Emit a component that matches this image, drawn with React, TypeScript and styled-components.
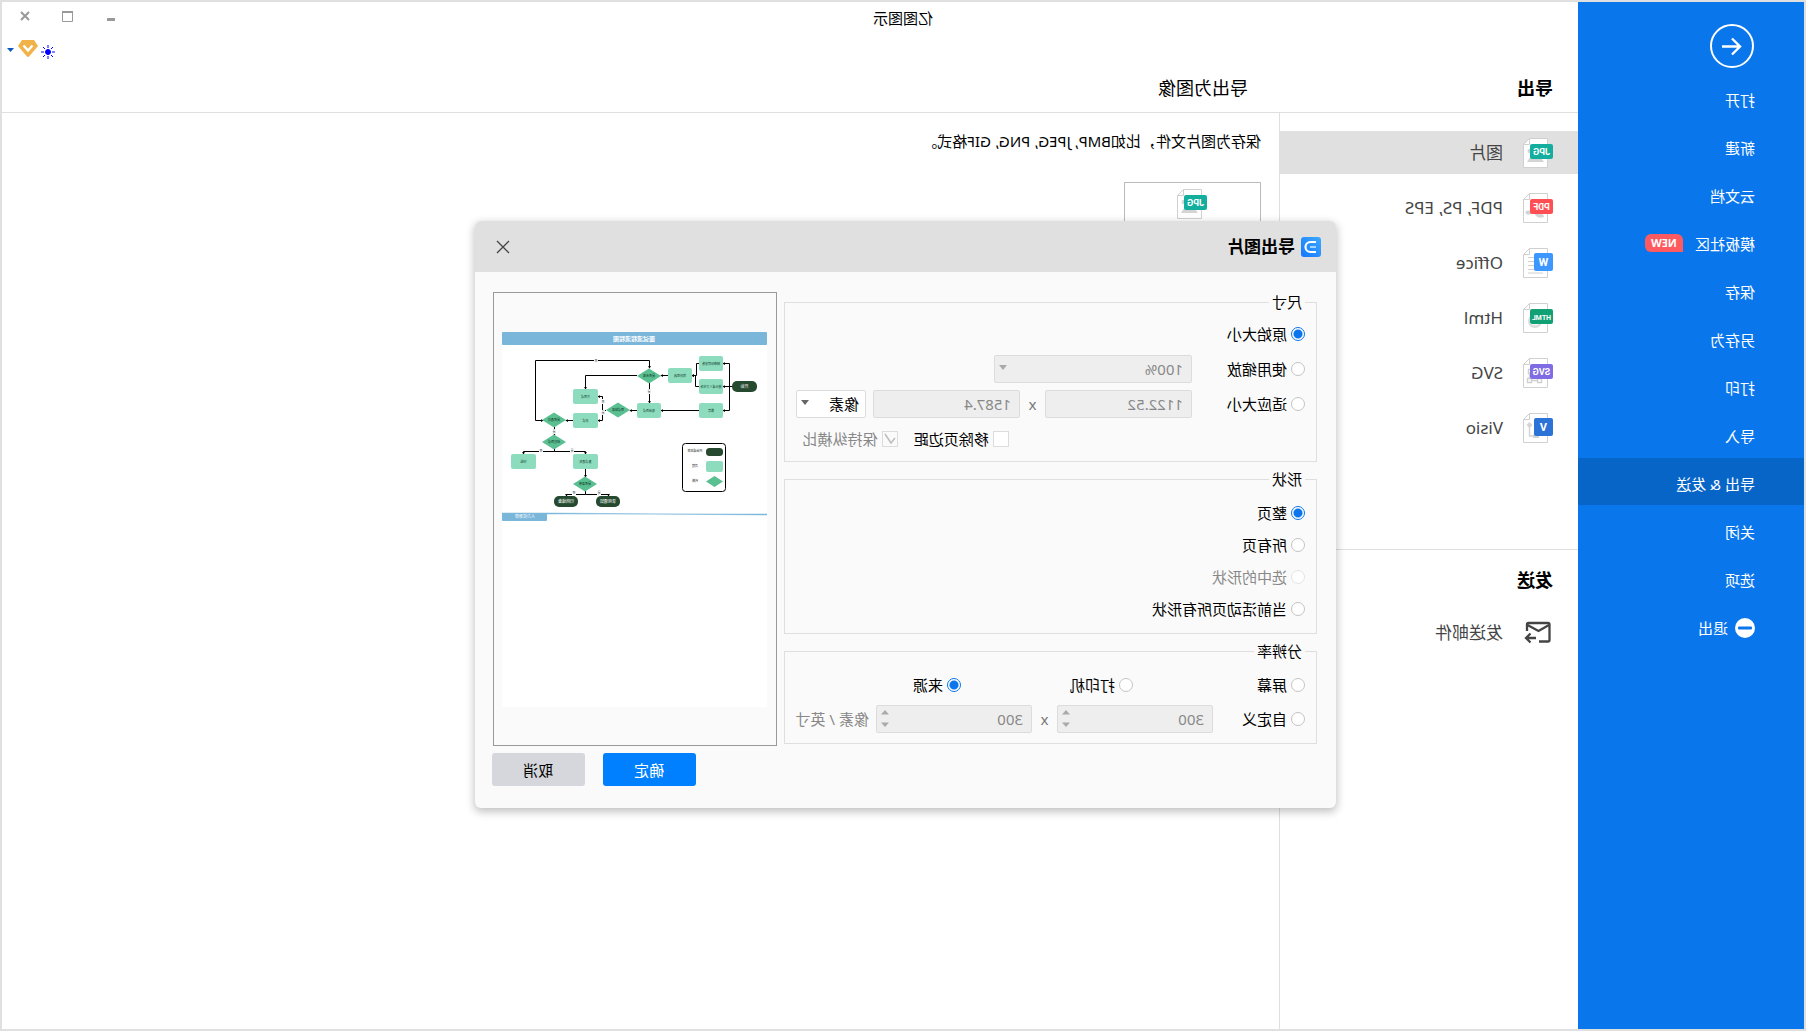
import React from 'react';
import styled, { createGlobalStyle, css } from 'styled-components';

const SIDEBAR = 226;
const LIST = 299;

const GlobalStyle = createGlobalStyle`
  *, *::before, *::after { box-sizing: border-box; }
  body { margin: 0; background: #fff; }
  body, button, input, select {
    font-family: "Noto Sans", "Noto Sans CJK SC", sans-serif;
    font-size: 15px;
    font-kerning: none;
    line-height: 20px;
    color: #000;
  }
`;

/* The whole window is flipped left to right, its text included. */
const Window = styled.div`
  position: relative;
  display: flex;
  min-height: 100vh;
  border: 2px solid #e0e0e0;
  background: #fff;
  transform: scaleX(-1);
`;

/* ---------- sidebar ---------- */

const Sidebar = styled.nav`
  flex: none;
  width: ${SIDEBAR}px;
  padding-top: 22px;
  background: #0a76eb;
`;

const BackButton = styled.button`
  display: block;
  width: 44px;
  height: 44px;
  margin: 0 0 6px 50px;
  padding: 0;
  border: 0;
  background: none;
`;

const Menu = styled.ul`
  display: flex;
  flex-direction: column;
  gap: 1px;
  margin: 0;
  padding: 0;
  list-style: none;
`;

const MenuLink = styled.a<{ $active?: boolean }>`
  display: flex;
  align-items: center;
  gap: 7px;
  height: 47px;
  padding: 4px 0 0 49px;
  background: ${(p) => (p.$active ? '#0865c8' : 'transparent')};
  color: #fff;
  text-decoration: none;
`;

const NewBadge = styled.span`
  margin: 0 0 2px 5px;
  width: 38px;
  border-radius: 6px 6px 6px 0;
  background: #ff5a5f;
  font-size: 11px;
  font-weight: 700;
  line-height: 18px;
  text-align: center;
`;

/* ---------- workspace ---------- */

const Workspace = styled.div`
  flex: 1;
  min-width: 0;
  display: flex;
  flex-direction: column;
`;

const TitleBar = styled.header`
  display: flex;
  height: 36px;
`;

const AppTitle = styled.div`
  flex: 1;
  line-height: 32px;
  text-align: center;
`;

const WindowControls = styled.div`
  display: flex;
  justify-content: flex-end;
  width: ${SIDEBAR}px;
  padding-right: 2px;
`;

const ControlButton = styled.button`
  display: grid;
  place-items: center;
  width: 43px;
  height: 27px;
  padding: 0;
  border: 0;
  background: none;
`;

const Tools = styled.div`
  display: flex;
  justify-content: flex-end;
  align-items: center;
  gap: 3px;
  height: 28px;
  padding: 0 4px 4px 0;
`;

const ToolButton = styled.button`
  display: grid;
  place-items: center;
  padding: 0;
  border: 0;
  background: none;
`;

const Headings = styled.div`
  display: flex;
  height: 47px;
  border-bottom: 1px solid #dfdfdf;
`;

const Heading = styled.h2<{ $plain?: boolean }>`
  margin: 0;
  font-size: 18px;
  font-weight: ${(p) => (p.$plain ? 400 : 700)};
  line-height: 44px;
  padding-left: ${(p) => (p.$plain ? 31 : 25)}px;
  ${(p) => !p.$plain && css`width: ${LIST}px;`}
`;

const Columns = styled.div`
  flex: 1;
  display: flex;
`;

const ListColumn = styled.div`
  flex: none;
  width: ${LIST}px;
  border-right: 1px solid #dfdfdf;
`;

const FormatSection = styled.section`
  min-height: 437px;
  padding-top: 18px;
  border-bottom: 1px solid #dfdfdf;
`;

const FormatList = styled.ul`
  display: flex;
  flex-direction: column;
  gap: 12px;
  margin: 0;
  padding: 0;
  list-style: none;
`;

const FormatLink = styled.a<{ $active?: boolean }>`
  display: flex;
  align-items: center;
  gap: 20px;
  height: 43px;
  padding-left: 25px;
  background: ${(p) => (p.$active ? '#e0e0e0' : 'transparent')};
  color: #444;
  font-size: 17px;
  text-decoration: none;
`;

const SendHeading = styled(Heading)`
  line-height: 61px;
`;

const Main = styled.main`
  flex: 1;
  padding: 18px;
`;

const Description = styled.p`
  margin: 0 0 31px;
`;

const FormatCard = styled.button`
  display: flex;
  justify-content: center;
  align-items: flex-start;
  width: 137px;
  height: 92px;
  padding: 6px 0 0;
  border: 1px solid #bbb;
  background: #fff;
`;

/* ---------- dialog ---------- */

const Overlay = styled.div`
  position: absolute;
  inset: 0;
  display: grid;
  place-items: center;
  padding: 0 5px 2px 0;
`;

const Dialog = styled.section`
  width: 861px;
  border-radius: 6px;
  background: #fafafa;
  box-shadow: 0 3px 8px 1px rgba(0, 0, 0, 0.24);
`;

const DialogHeader = styled.header`
  display: flex;
  align-items: center;
  gap: 6px;
  height: 51px;
  padding: 0 15px;
  border-radius: 6px 6px 0 0;
  background: #e0e0e0;
`;

const DialogTitle = styled.h1`
  flex: 1;
  margin: 0;
  font-size: 17px;
  font-weight: 700;
`;

const CloseButton = styled.button`
  display: grid;
  place-items: center;
  width: 26px;
  height: 26px;
  padding: 0;
  border: 0;
  background: none;
`;

const DialogBody = styled.form`
  display: flex;
  gap: 7px;
  padding: 20px 17px 22px 19px;
`;

const Options = styled.div`
  flex: 1;
  display: flex;
  flex-direction: column;
  gap: 7px;
`;

const Group = styled.fieldset<{ $gap: number; $dense?: boolean }>`
  display: flex;
  flex-direction: column;
  gap: ${(p) => p.$gap}px;
  min-width: 0;
  margin: 0;
  padding: ${(p) => (p.$dense ? 8 : 10)}px 11px;
  border: 1px solid #dfdfdf;
`;

const Legend = styled.legend`
  padding: 0 3px;
`;

const Row = styled.div<{ $end?: boolean }>`
  display: flex;
  align-items: center;
  height: 28px;
  ${(p) => p.$end && css`
    justify-content: flex-end;
    gap: 16px;
    padding-right: 7px;
  `}
`;

const OptionLabel = styled.label<{ $width?: number; $muted?: boolean }>`
  display: flex;
  align-items: center;
  gap: 4px;
  width: ${(p) => (p.$width ? p.$width + 'px' : 'auto')};
  color: ${(p) => (p.$muted ? '#888' : '#000')};
  white-space: nowrap;
`;

const RadioInput = styled.input`
  appearance: none;
  flex: none;
  width: 14px;
  height: 14px;
  margin: 0;
  border: 1px solid #c4c4c4;
  border-radius: 50%;
  background: #fff;
  &:checked {
    border-color: #0a76eb;
    background: radial-gradient(circle, #0a76eb 4px, #fff 5px);
  }
  &:disabled { border-color: #e4e4e4; }
`;

const CheckBox = styled.span`
  position: relative;
  display: block;
  width: 16px;
  height: 16px;
  svg { position: absolute; inset: 0; }
`;

const CheckInput = styled.input`
  appearance: none;
  display: block;
  width: 16px;
  height: 16px;
  margin: 0;
  border: 1px solid #dcdcdc;
  background: #fff;
  &:disabled { background: #fafafa; }
`;

const fieldLook = css`
  width: 100%;
  height: 28px;
  margin: 0;
  padding: 0 8px;
  border: 1px solid #dcdcdc;
  border-radius: 2px;
  background: #fff;
  color: #000;
  appearance: none;
  &:disabled {
    background: #eee;
    color: #888;
    opacity: 1;
  }
`;

const FieldBox = styled.span<{ $width: number }>`
  position: relative;
  display: block;
  flex: none;
  width: ${(p) => p.$width}px;
`;

const TextField = styled.input`
  ${fieldLook}
`;

const NumberField = styled.input`
  ${fieldLook}
  appearance: textfield;
  &::-webkit-inner-spin-button { appearance: none; }
`;

const SelectField = styled.select<{ $tight?: boolean }>`
  ${fieldLook}
  padding: 0 ${(p) => (p.$tight ? 6 : 8)}px;
`;

const FieldMark = styled.svg`
  position: absolute;
  top: 0;
  right: 0;
  pointer-events: none;
`;

const Times = styled.span`
  width: 25px;
  color: #777;
  text-align: center;
`;

const Unit = styled.span`
  padding-left: 7px;
  color: #888;
  white-space: nowrap;
`;

const Spacer = styled.span`
  width: 7px;
`;

const Side = styled.div`
  flex: none;
  width: 285px;
`;

const Preview = styled.div`
  width: 284px;
  height: 454px;
  padding: 39px 0 0 9px;
  border: 1px solid #999;
`;

const Actions = styled.div`
  display: flex;
  justify-content: flex-end;
  gap: 18px;
  padding-top: 7px;
`;

const ActionButton = styled.button<{ $primary?: boolean }>`
  width: 93px;
  height: 33px;
  padding: 0;
  border: 0;
  border-radius: 3px;
  background: ${(p) => (p.$primary ? '#0080ff' : '#d5d7dc')};
  color: ${(p) => (p.$primary ? '#fff' : '#000')};
`;

/* ---------- drawings ---------- */

type Kind = 'JPG' | 'PDF' | 'W' | 'HTML' | 'SVG' | 'V';

const badgeColor: Record<Kind, string> = {
  JPG: '#14ae9f',
  PDF: '#ff4f54',
  W: '#3c97ff',
  HTML: '#12a174',
  SVG: '#7f6ce4',
  V: '#2b73d6',
};

const badgeTextSize: Record<Kind, number> = { JPG: 9, PDF: 9, W: 11, HTML: 7, SVG: 9, V: 11 };

const pageArt: Record<Kind, React.ReactNode> = {
  JPG: <path d="M9 24l5-7 4 3 3-4 5 8zM22 11a2.300 2.300 0 1 1 0 4z" fill="#d4d4d4" />,
  PDF: (
    <>
      <path d="M9 24q0-3 4-4h6l-2 3q-3 3-8 1z" fill="#d4d4d4" />
      <ellipse cx="24.500" cy="19.500" rx="3" ry="2" fill="#d4d4d4" />
    </>
  ),
  W: <path d="M18 9.500h7M18 13.500h7M18 17.500h7M10 21.500h15M10 25h15" stroke="#d0d0d0" />,
  HTML: (
    <>
      <circle cx="18" cy="18" r="7" fill="#dcdcdc" />
      <path d="M13 20q5 4 10 0" stroke="#fff" fill="none" />
    </>
  ),
  SVG: (
    <path
      d="M11.500 20.500h4v4h-4zM21.500 20.500h4v4h-4zM15.500 22.500h6M23.500 20.500v-6M20.500 11.500h4v4h-4z"
      fill="none"
      stroke="#d0d0d0"
      strokeWidth="1.400"
    />
  ),
  V: (
    <>
      <path d="M23.500 9l3 3-3 3-3-3zM14 21.500h6v3.500h-6z" fill="#d4d4d4" />
      <path d="M23.500 14v9h-5" fill="none" stroke="#d4d4d4" strokeWidth="1.400" />
    </>
  ),
};

function FileIcon({ kind }: { kind: Kind }) {
  const square = kind === 'W' || kind === 'V';
  return (
    <svg width="30" height="30" viewBox="0 0 30 30" aria-hidden="true">
      <path d="M5.500.500H23.500L29.500 6.500V29.500H5.500z" fill="#fff" stroke="#d0d0d0" />
      <path d="M23.500.500V6.500H29.500" fill="none" stroke="#d0d0d0" />
      {pageArt[kind]}
      <rect
        x="0"
        y={square ? 5 : 6}
        width={square ? 19 : 23}
        height={square ? 18 : 15}
        rx="2"
        fill={badgeColor[kind]}
      />
      <text
        x={square ? 9.5 : 11.500}
        y={square ? 18 : 17}
        textAnchor="middle"
        fill="#fff"
        fontFamily="Roboto, sans-serif"
        fontWeight="700"
        fontSize={badgeTextSize[kind]}
      >
        {kind}
      </text>
    </svg>
  );
}

function MailIcon() {
  return (
    <svg width="30" height="30" viewBox="0 0 30 30" fill="none" stroke="#444" strokeWidth="2.300" aria-hidden="true">
      <path d="M14 23.500H5Q3.500 23.500 3.500 22V6.500Q3.500 5 5 5H24.500Q26 5 26 6.500V13" />
      <path d="M4 7L14.500 13L25.500 7" />
      <path d="M17 20H27M22.500 15.500L27 20L22.500 24.500" />
    </svg>
  );
}

function AppLogo() {
  return (
    <svg width="20" height="20" viewBox="0 0 20 20" fill="none" aria-hidden="true">
      <defs>
        <linearGradient id="logoFill" x1="0" y1="0" x2="1" y2="1">
          <stop offset="0" stopColor="#3fa9ff" />
          <stop offset="1" stopColor="#1277ff" />
        </linearGradient>
      </defs>
      <rect width="20" height="20" rx="3" fill="url(#logoFill)" />
      <path d="M5 5H10.500A5 5 0 0 1 10.500 15H5" stroke="#fff" strokeWidth="2.200" />
      <path d="M5 10H11" stroke="#a5d4ff" strokeWidth="2" />
    </svg>
  );
}

type Box = [number, number, number, number, string];

const steps: Box[] = [
  [43, 24, 24, 15, '网络招聘收集'],
  [43, 47, 24, 15, '猎头或人才市场'],
  [43, 71, 24, 15, '推荐'],
  [74, 36, 24, 15, '简历筛选'],
  [105, 71, 24, 15, '电话面试'],
  [168, 57, 25, 15, '再面试'],
  [168, 81, 25, 15, '初试'],
  [230, 122, 25, 15, '归档'],
  [168, 122, 25, 15, '复试通知'],
];

const pills: Box[] = [
  [9, 49, 25, 11, '开始'],
  [188, 164, 24, 11, '归档储备'],
  [146, 164, 24, 11, '录用通知'],
];

const decisions: [number, number, string][] = [
  [117, 44, '是否合格'],
  [148, 78, '面试结果'],
  [212, 88, '是否通过'],
  [212, 110, '经理面试'],
  [181, 152, '是否录用'],
];

const branches: [number, number, string][] = [
  [170, 30, '否'],
  [117, 61, '是'],
  [163, 71, '否'],
  [163, 82, '是'],
  [212, 101, '是'],
  [225, 120, '否'],
  [194, 120, '是'],
  [192, 162, '否'],
  [167, 162, '是'],
];

function Flowchart() {
  return (
    <svg width="265" height="375" viewBox="-1 0 265 375" fontSize="4" textAnchor="middle" role="img" aria-label="流程图">
      <defs>
        <marker id="tip" viewBox="0 0 4 4" refX="3" refY="2" markerWidth="3" markerHeight="3" orient="auto">
          <path d="M0 0L4 2L0 4z" fill="#000" />
        </marker>
      </defs>
      <rect x="-1" width="265" height="375" fill="#fff" />
      <rect x="-1" width="265" height="13" rx="1" fill="#79b6da" />
      <text x="132" y="9" fontSize="6" fontWeight="700" fill="#fff">面试流程流程图</text>
      <g fill="none" stroke="#000" markerEnd="url(#tip)">
        <path d="M34 54.500H36.500V31.500H43" />
        <path d="M34 54.500H43" />
        <path d="M36.500 54.500V78.500H43" />
        <path d="M67 31.500H69.500V43.500H74" />
        <path d="M67 54.500H70.500V43.500H74" />
        <path d="M98 43.500H105" />
        <path d="M67 78.500H105" />
        <path d="M129 43.500H180.500V57" />
        <path d="M116.500 51V71" />
        <path d="M129 78.500H136" />
        <path d="M160 78.500H163.500V64.500H168" />
        <path d="M163.500 78.500V88.500H168" />
        <path d="M193 88.500H200" />
        <path d="M230.500 28.500H116.500V36" />
        <path d="M230.500 28.500V88.500H223" />
        <path d="M211.500 95V103" />
        <path d="M211.500 117V119.500H242.500V122" />
        <path d="M211.500 119.500H180.500V122" />
        <path d="M180.500 137V145" />
        <path d="M180.500 159V162.500H199.500V164" />
        <path d="M180.500 162.500H157.500V164" />
      </g>
      {branches.map(([x, y, t]) => (
        <g key={x + '-' + y}>
          <rect x={x - 2} y={y - 4} width="4" height="5" fill="#fff" />
          <text x={x} y={y} fontSize="3" fill="#345">{t}</text>
        </g>
      ))}
      {steps.map(([x, y, w, h, t]) => (
        <g key={t}>
          <rect x={x} y={y} width={w} height={h} rx="2" fill="#8edcbe" />
          <text x={x + w / 2} y={y + 8.500} fontSize="3" fill="#10402c">{t}</text>
        </g>
      ))}
      {decisions.map(([x, y, t]) => (
        <g key={t}>
          <path d={`M${x - 12} ${y}L${x} ${y - 7.500}L${x + 12} ${y}L${x} ${y + 7.500}z`} fill="#5abf91" />
          <text x={x} y={y + 1} fontSize="3" fill="#0a3020">{t}</text>
        </g>
      ))}
      {pills.map(([x, y, w, h, t]) => (
        <g key={t}>
          <rect x={x} y={y} width={w} height={h} rx="5" fill="#254a30" />
          <text x={x + w / 2} y={y + 7} fill="#fff">{t}</text>
        </g>
      ))}
      <rect x="40.500" y="111.500" width="43" height="48" rx="3" fill="#fff" stroke="#000" />
      <rect x="43" y="116" width="17" height="8" rx="3.500" fill="#254a30" />
      <rect x="43" y="129" width="17" height="11" rx="2" fill="#8edcbe" />
      <path d="M43 149.500L51.500 144L60 149.500L51.500 155z" fill="#5abf91" />
      <g fill="#333" fontSize="3">
        <text x="71" y="120">开始或结束</text>
        <text x="71" y="135">流程</text>
        <text x="71" y="150">判断</text>
      </g>
      <path d="M-1 182H264V181H219L-1 183z" fill="#79b6da" stroke="#79b6da" strokeWidth=".5" />
      <rect x="219" y="181" width="45" height="8" rx="1" fill="#79b6da" />
      <text x="241" y="186" fill="#fff">人力资源部</text>
    </svg>
  );
}

function DropArrow({ muted }: { muted?: boolean }) {
  return (
    <FieldMark width="22" height="28" viewBox="0 0 22 28" aria-hidden="true">
      <path d="M9 10H17L13 15z" fill={muted ? '#aaa' : '#666'} />
    </FieldMark>
  );
}

function SpinArrows() {
  return (
    <FieldMark width="18" height="28" viewBox="0 0 18 28" aria-hidden="true">
      <path d="M5 9.500H13L9 5zM5 17.500H13L9 22z" fill="#aaa" />
    </FieldMark>
  );
}

/* ---------- parts ---------- */

interface RadioProps {
  name: string;
  text: string;
  width?: number;
  checked?: boolean;
  disabled?: boolean;
}

function Radio({ name, text, width, checked, disabled }: RadioProps) {
  return (
    <OptionLabel $width={width} $muted={disabled}>
      <RadioInput type="radio" name={name} defaultChecked={checked} disabled={disabled} />
      {text}
    </OptionLabel>
  );
}

const menu = ['打开', '新建', '云文档', '模板社区', '保存', '另存为', '打印', '导入', '导出 & 发送', '关闭', '选项', '退出'];

const formats: { kind: Kind; text: string }[] = [
  { kind: 'JPG', text: '图片' },
  { kind: 'PDF', text: 'PDF, PS, EPS' },
  { kind: 'W', text: 'Office' },
  { kind: 'HTML', text: 'Html' },
  { kind: 'SVG', text: 'SVG' },
  { kind: 'V', text: 'Visio' },
];

function ExportDialog() {
  return (
    <Dialog role="dialog" aria-labelledby="dialog-title">
      <DialogHeader>
        <AppLogo />
        <DialogTitle id="dialog-title">导出图片</DialogTitle>
        <CloseButton type="button" aria-label="关闭">
          <svg width="14" height="14" viewBox="0 0 14 14" stroke="#444" strokeWidth="1.300" aria-hidden="true">
            <path d="M1 1L13 13M13 1L1 13" />
          </svg>
        </CloseButton>
      </DialogHeader>
      <DialogBody onSubmit={(e) => e.preventDefault()}>
        <Options>
          <Group $gap={7} $dense>
            <Legend>尺寸</Legend>
            <Row>
              <Radio name="size" text="原始大小" checked />
            </Row>
            <Row>
              <Radio name="size" text="使用缩放" width={113} />
              <FieldBox $width={198}>
                <SelectField aria-label="使用缩放" disabled>
                  <option>100%</option>
                </SelectField>
                <DropArrow muted />
              </FieldBox>
            </Row>
            <Row>
              <Radio name="size" text="适应大小" width={113} />
              <FieldBox $width={147}>
                <TextField aria-label="宽" defaultValue="1122.52" disabled />
              </FieldBox>
              <Times>x</Times>
              <FieldBox $width={147}>
                <TextField aria-label="高" defaultValue="1587.4" disabled />
              </FieldBox>
              <Spacer />
              <FieldBox $width={70}>
                <SelectField aria-label="单位" $tight>
                  <option>像素</option>
                </SelectField>
                <DropArrow />
              </FieldBox>
            </Row>
            <Row $end>
              <OptionLabel>
                <CheckBox>
                  <CheckInput type="checkbox" />
                </CheckBox>
                移除页边距
              </OptionLabel>
              <OptionLabel $muted>
                <CheckBox>
                  <CheckInput type="checkbox" defaultChecked disabled />
                  <svg width="16" height="16" viewBox="0 0 16 16" fill="none" stroke="#bbb" strokeWidth="1.500" aria-hidden="true">
                    <path d="M3 7L7 12L13 3" />
                  </svg>
                </CheckBox>
                保持纵横比
              </OptionLabel>
            </Row>
          </Group>
          <Group $gap={4}>
            <Legend>形状</Legend>
            <Row><Radio name="shape" text="整页" checked /></Row>
            <Row><Radio name="shape" text="所有页" /></Row>
            <Row><Radio name="shape" text="选中的形状" disabled /></Row>
            <Row><Radio name="shape" text="当前活动页所有形状" /></Row>
          </Group>
          <Group $gap={6}>
            <Legend>分辨率</Legend>
            <Row>
              <Radio name="resolution" text="屏幕" width={172} />
              <Radio name="resolution" text="打印机" width={172} />
              <Radio name="resolution" text="来源" checked />
            </Row>
            <Row>
              <Radio name="resolution" text="自定义" width={92} />
              <FieldBox $width={156}>
                <NumberField type="number" aria-label="水平分辨率" defaultValue={300} disabled />
                <SpinArrows />
              </FieldBox>
              <Times>x</Times>
              <FieldBox $width={156}>
                <NumberField type="number" aria-label="垂直分辨率" defaultValue={300} disabled />
                <SpinArrows />
              </FieldBox>
              <Unit>像素 / 英寸</Unit>
            </Row>
          </Group>
        </Options>
        <Side>
          <Preview>
            <Flowchart />
          </Preview>
          <Actions>
            <ActionButton type="submit" $primary>确定</ActionButton>
            <ActionButton type="button">取消</ActionButton>
          </Actions>
        </Side>
      </DialogBody>
    </Dialog>
  );
}

export default function App() {
  return (
    <>
      <GlobalStyle />
      <Window>
        <Sidebar>
          <BackButton type="button" aria-label="返回">
            <svg width="44" height="44" viewBox="0 0 44 44" fill="none" stroke="#fff" strokeWidth="2" aria-hidden="true">
              <circle cx="22" cy="22" r="21" />
              <path d="M32 22.500H14M22 14.500L14 22.500L22 30.500" strokeWidth="2.400" />
            </svg>
          </BackButton>
          <Menu>
            {menu.map((text) => (
              <li key={text}>
                <MenuLink href="#" $active={text === '导出 & 发送'}>
                  {text === '退出' && (
                    <svg width="20" height="20" viewBox="0 0 20 20" aria-hidden="true">
                      <circle cx="10" cy="10" r="10" fill="#fff" />
                      <rect x="3" y="8.500" width="14" height="3" rx="1" fill="#0a76eb" />
                    </svg>
                  )}
                  <span>{text}</span>
                  {text === '模板社区' && <NewBadge>NEW</NewBadge>}
                </MenuLink>
              </li>
            ))}
          </Menu>
        </Sidebar>

        <Workspace>
          <TitleBar>
            <AppTitle>亿图图示</AppTitle>
            <WindowControls>
              <ControlButton type="button" aria-label="最小化">
                <svg width="12" height="12" viewBox="0 0 12 12" aria-hidden="true">
                  <rect x="2" y="8" width="8" height="3" fill="#999" />
                </svg>
              </ControlButton>
              <ControlButton type="button" aria-label="最大化">
                <svg width="12" height="12" viewBox="0 0 12 12" aria-hidden="true">
                  <path d="M1.500 1.500H11.500V11.500H1.500z" fill="none" stroke="#999" />
                  <rect x="1" y="1" width="11" height="2" fill="#999" />
                </svg>
              </ControlButton>
              <ControlButton type="button" aria-label="关闭窗口">
                <svg width="12" height="12" viewBox="0 0 12 12" stroke="#999" strokeWidth="2" aria-hidden="true">
                  <path d="M2 2L10 10M10 2L2 10" />
                </svg>
              </ControlButton>
            </WindowControls>
          </TitleBar>
          <Tools>
            <ToolButton type="button" aria-label="主题">
              <svg width="14" height="20" viewBox="0 0 14 20" stroke="#00f" aria-hidden="true">
                <circle cx="7" cy="12" r="2.500" fill="#00f" />
                <path d="M7 5V8M7 16V19M0 12H3M11 12H14M2 7L4 9M10 15L12 17M12 7L10 9M4 15L2 17" />
              </svg>
            </ToolButton>
            <ToolButton type="button" aria-label="会员">
              <svg width="20" height="24" viewBox="0 0 20 24" aria-hidden="true">
                <path d="M4 2H16L20 8L11.500 18Q10 20 8.500 18L0 8z" fill="#f2b24a" />
                <path d="M5.500 7.500L10 12.500L14.500 7.500" fill="none" stroke="#fff" strokeWidth="2.400" />
              </svg>
            </ToolButton>
            <ToolButton type="button" aria-label="更多">
              <svg width="9" height="8" viewBox="0 0 9 8" aria-hidden="true">
                <path d="M1 2H8L4.500 6z" fill="#0a58c0" />
              </svg>
            </ToolButton>
          </Tools>
          <Headings>
            <Heading>导出</Heading>
            <Heading $plain>导出为图像</Heading>
          </Headings>
          <Columns>
            <ListColumn>
              <FormatSection>
                <FormatList>
                  {formats.map((f) => (
                    <li key={f.kind}>
                      <FormatLink href="#" $active={f.kind === 'JPG'}>
                        <FileIcon kind={f.kind} />
                        {f.text}
                      </FormatLink>
                    </li>
                  ))}
                </FormatList>
              </FormatSection>
              <SendHeading>发送</SendHeading>
              <FormatLink href="#">
                <MailIcon />
                发送邮件
              </FormatLink>
            </ListColumn>
            <Main>
              <Description>保存为图片文件，比如BMP, JPEG, PNG, GIF格式。</Description>
              <FormatCard type="button" aria-label="JPG">
                <FileIcon kind="JPG" />
              </FormatCard>
            </Main>
          </Columns>
        </Workspace>

        <Overlay>
          <ExportDialog />
        </Overlay>
      </Window>
    </>
  );
}
